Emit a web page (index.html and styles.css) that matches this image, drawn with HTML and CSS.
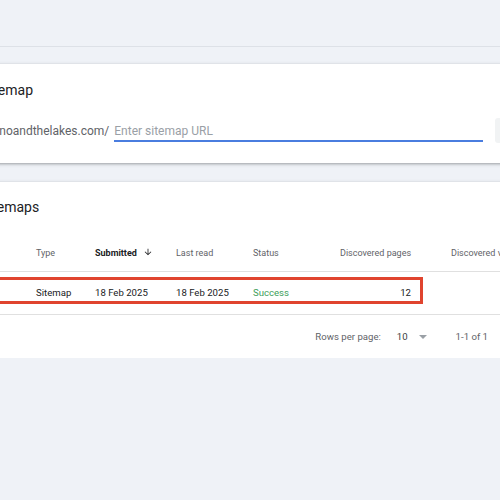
FILE: index.html
```html
<!DOCTYPE html>
<html lang="en">
<head>
  <meta charset="UTF-8" />
  <meta name="viewport" content="width=device-width, initial-scale=1.0"/>
  <title>Sitemaps</title>
  <link rel="stylesheet" href="styles.css">
</head>
<body>
  <div class="topbar"></div>

  <div class="page">
    <div class="card add-card">
      <h2 class="card-title">Add a new sitemap</h2>
      <div class="url-row">
        <span class="url-prefix">https://www.milanoandthelakes.com/</span>
        <input class="url-input" type="text" placeholder="Enter sitemap URL">
        <button class="submit-btn">SUBMIT</button>
      </div>
    </div>

    <div class="card list-card">
      <h2 class="card-title">Submitted sitemaps</h2>
      <table class="sitemaps">
        <thead>
          <tr>
            <th class="col-sitemap">Sitemap</th>
            <th class="col-type">Type</th>
            <th class="col-submitted sorted">Submitted
              <svg class="sort-arrow" viewBox="0 0 24 24" width="10" height="10"><path d="M20 12l-1.41-1.41L13 16.17V4h-2v12.17l-5.58-5.59L4 12l8 8 8-8z" fill="#202124"/></svg>
            </th>
            <th class="col-read">Last read</th>
            <th class="col-status">Status</th>
            <th class="col-pages">Discovered pages</th>
            <th class="col-videos">Discovered videos</th>
          </tr>
        </thead>
        <tbody>
          <tr>
            <td>/sitemap.xml</td>
            <td>Sitemap</td>
            <td>18 Feb 2025</td>
            <td>18 Feb 2025</td>
            <td class="ok">Success</td>
            <td class="col-pages">12</td>
            <td></td>
          </tr>
        </tbody>
      </table>
      <div class="table-footer">
        <span>Rows per page:</span>
        <span class="rows-select">10 <span class="caret"></span></span>
        <span class="range">1-1 of 1</span>
        <span class="pager"></span>
      </div>
      <div class="highlight"></div>
    </div>
  </div>
</body>
</html>
```

FILE: styles.css
```css
html, body {
  overflow: hidden;
}
body {
  margin: 0;
  background-color: #eff2f7;
  font-family: Roboto, "Liberation Sans", sans-serif;
  color: #202124;
}
.topbar {
  height: 46px;
  border-bottom: 1px solid #dde1e7;
}
.page {
  margin-left: -120px;
  width: 740px;
  padding-top: 17px;
}
.card {
  background-color: #fff;
  box-shadow: 0 1px 2px rgba(60, 64, 67, 0.3), 0 1px 3px 1px rgba(60, 64, 67, 0.15);
  padding: 0 24px;
  position: relative;
}
.card-title {
  margin: 0 0 0 10px;
  font-size: 14px;
  font-weight: 400;
  line-height: 20px;
  color: #202124;
}
.add-card {
  padding-top: 16px;
  padding-bottom: 20px;
  margin-bottom: 19px;
}
.url-row {
  display: flex;
  align-items: flex-start;
  height: 25px;
  margin-top: 18px;
  padding-left: 4px;
}
.url-prefix {
  font-size: 12px;
  line-height: 16px;
  margin-top: 5px;
  color: #5f6368;
}
.url-input {
  box-sizing: border-box;
  width: 369px;
  height: 24px;
  margin-left: 5px;
  padding: 4px 0 0;
  border: none;
  border-bottom: 2px solid #4a7ddf;
  outline: none;
  font-family: Roboto, "Liberation Sans", sans-serif;
  font-size: 12px;
}
.url-input::placeholder {
  color: #9aa0a6;
}
.submit-btn {
  margin-left: 12px;
  width: 80px;
  height: 25px;
  border: none;
  border-radius: 3px;
  background-color: #f1f3f4;
  color: #9aa0a6;
  font-size: 10px;
}
.list-card {
  padding-top: 15px;
}
.sitemaps {
  border-collapse: collapse;
  table-layout: fixed;
  width: 692px;
  font-size: 9.6px;
}
.sitemaps th {
  font-size: 9px;
  font-weight: 400;
  color: #5f6368;
  text-align: left;
  line-height: 16px;
  padding: 28px 0 10px;
  border-bottom: 1px solid #e0e0e0;
  white-space: nowrap;
}
.sitemaps th.sorted {
  font-weight: 700;
  color: #202124;
}
.sort-arrow {
  margin-left: 4px;
  vertical-align: -1px;
}
.sitemaps td {
  line-height: 16px;
  padding: 13px 0 13px;
  border-bottom: 1px solid #e0e0e0;
  white-space: nowrap;
}
.col-sitemap { width: 132px; }
.col-type { width: 59px; }
.col-submitted { width: 81px; }
.col-read { width: 77px; }
.col-status { width: 87px; }
.sitemaps .col-pages {
  width: 71px;
  padding-right: 40px;
  text-align: right;
}
.ok {
  color: #3c9e5a;
}
.table-footer {
  display: flex;
  justify-content: flex-end;
  align-items: center;
  font-size: 9.6px;
  line-height: 16px;
  color: #5f6368;
  padding: 14px 0 13px;
}
.rows-select {
  margin-left: 16px;
  color: #3c4043;
  display: flex;
  align-items: center;
}
.caret {
  margin-left: 11px;
  width: 0;
  height: 0;
  border-left: 4px solid transparent;
  border-right: 4px solid transparent;
  border-top: 4px solid #9aa0a6;
}
.range {
  margin-left: 29px;
}
.pager {
  width: 84px;
  margin-left: 24px;
}
.highlight {
  position: absolute;
  left: 90px;
  top: 95px;
  width: 447px;
  height: 21px;
  border: 3px solid #e0442e;
}
```
